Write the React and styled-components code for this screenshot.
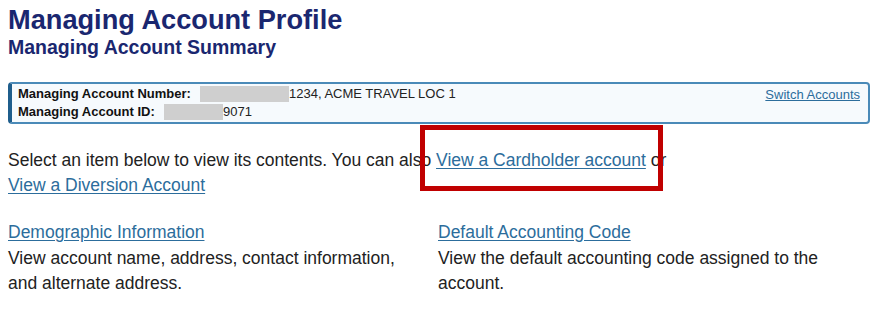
import React from "react";
import styled, { createGlobalStyle } from "styled-components";

const Global = createGlobalStyle`
  html, body { margin: 0; padding: 0; background: #ffffff; }
  body { font-family: "Liberation Sans", Arial, sans-serif; color: #222222; }
`;

const Page = styled.div`
  position: relative;
  width: 881px;
  height: 315px;
  overflow: hidden;
  padding: 4px 8px 0 8px;
  box-sizing: border-box;
`;

const Title = styled.h1`
  margin: 0;
  font-size: 27.2px;
  line-height: 32px;
  font-weight: bold;
  color: #1a2770;
`;

const Subtitle = styled.h2`
  margin: 0;
  font-size: 19.5px;
  line-height: 22px;
  font-weight: bold;
  color: #1a2770;
`;

const SummaryBox = styled.div`
  margin-top: 24px;
  width: 862px;
  box-sizing: border-box;
  border: 2px solid #4a8ab8;
  border-left: 4px solid #1f5e8c;
  border-radius: 4px;
  background: #f6fafd;
  padding: 1px 8px 1px 6px;
  display: flex;
  justify-content: space-between;
  align-items: flex-start;
`;

const Fields = styled.div`
  display: flex;
  flex-direction: column;
`;

const FieldRow = styled.div`
  display: flex;
  align-items: center;
  font-size: 13px;
  line-height: 18px;
`;

const FieldLabel = styled.span`
  font-weight: bold;
  color: #111111;
  width: ${(p) => p.$w}px;
`;

const Redacted = styled.span`
  display: inline-block;
  width: ${(p) => p.$w}px;
  height: 16px;
  background: #cfcfcf;
`;

const FieldValue = styled.span`
  color: #222222;
`;

const SmallLink = styled.a`
  font-size: 13px;
  line-height: 18px;
  color: #2c6d9c;
  text-decoration: underline;
  margin-top: 1px;
`;

const Intro = styled.p`
  margin: 24px 0 0 0;
  font-size: 17.5px;
  line-height: 25px;
  color: #222222;
`;

const Link = styled.a`
  color: #2c6d9c;
  text-decoration: underline;
  text-underline-offset: 2px;
`;

const Grid = styled.div`
  margin-top: 22px;
  display: grid;
  grid-template-columns: 430px 430px;
`;

const Item = styled.div`
  display: flex;
  flex-direction: column;
  font-size: 17.5px;
  line-height: 25.5px;
  padding-right: 20px;
`;

const Highlight = styled.div`
  position: absolute;
  left: 420px;
  top: 125px;
  width: 243px;
  height: 66px;
  box-sizing: border-box;
  border: 5px solid #c00000;
`;

export default function App() {
  return (
    <>
      <Global />
      <Page>
        <Title>Managing Account Profile</Title>
        <Subtitle>Managing Account Summary</Subtitle>
        <SummaryBox>
          <Fields>
            <FieldRow>
              <FieldLabel $w={182}>Managing Account Number:</FieldLabel>
              <Redacted $w={89} />
              <FieldValue>1234, ACME TRAVEL LOC 1</FieldValue>
            </FieldRow>
            <FieldRow>
              <FieldLabel $w={146}>Managing Account ID:</FieldLabel>
              <Redacted $w={59} />
              <FieldValue>9071</FieldValue>
            </FieldRow>
          </Fields>
          <SmallLink href="#">Switch Accounts</SmallLink>
        </SummaryBox>
        <Intro>
          Select an item below to view its contents. You can also{" "}
          <Link href="#">View a Cardholder account</Link> or
          <br />
          <Link href="#">View a Diversion Account</Link>
        </Intro>
        <Grid>
          <Item>
            <Link href="#">Demographic Information</Link>
            <span>View account name, address, contact information, and alternate address.</span>
          </Item>
          <Item>
            <Link href="#">Default Accounting Code</Link>
            <span>View the default accounting code assigned to the account.</span>
          </Item>
        </Grid>
        <Highlight />
      </Page>
    </>
  );
}
